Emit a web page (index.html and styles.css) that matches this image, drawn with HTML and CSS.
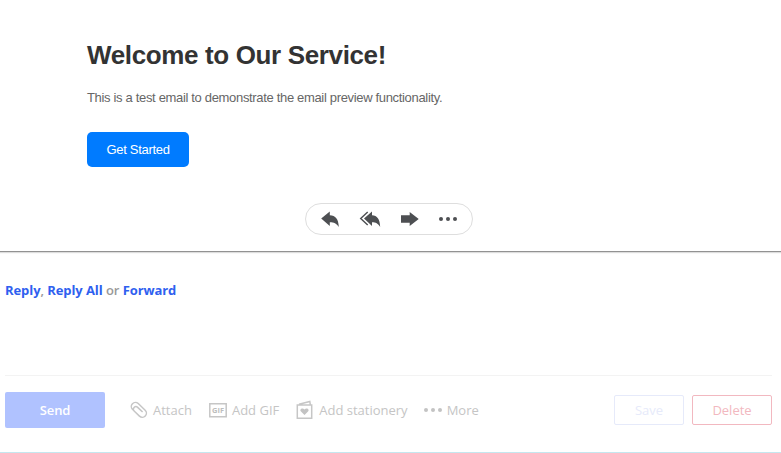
FILE: index.html
```html
<!DOCTYPE html>
<html lang="en">
<head>
<meta charset="utf-8">
<title>Email preview</title>
<link rel="stylesheet" href="styles.css">
</head>
<body>
<main class="message">
  <article class="email">
    <h1>Welcome to Our Service!</h1>
    <p>This is a test email to demonstrate the email preview functionality.</p>
    <a class="cta">Get Started</a>
  </article>
  <nav class="pill">
    <svg class="act" viewBox="0 0 20 18"><path d="M1.200 8.500 9.800 1.400v3.900C15.500 5.400 18.500 9 18.800 17 16.500 13.500 14 12.300 9.800 12.300v3.600z"/></svg>
    <svg class="act wide" viewBox="0 0 22 18"><path d="M5 8.500 13 1.400v3.900c5.200.100 7.800 3.700 8.200 11.700-2.200-3.500-4.400-4.700-8.200-4.700v3.600z"/><path class="line" d="M8.700 2 1.700 8.500l7 6.500"/></svg>
    <svg class="act arrow" viewBox="0 0 20 18"><path d="M1 5.200h8.700V2.100L18.700 9l-9 6.900v-3.200H1z"/></svg>
    <svg class="act" viewBox="0 0 20 18"><circle cx="3" cy="9" r="2"/><circle cx="10" cy="9" r="2"/><circle cx="17" cy="9" r="2"/></svg>
  </nav>
</main>
<section class="composer">
  <p class="quick"><b>Reply</b>, <b>Reply All</b> or <b>Forward</b></p>
  <footer class="bar">
    <button class="send">Send</button>
    <div class="tool attach"><svg width="18" height="18" viewBox="0 0 18 18"><path transform="translate(9 9) rotate(44)" d="M-4.500 4.100H-5A4.100 4.100 0 0 1-5-4.100H4.600A4.100 4.100 0 0 1 4.600 4.100H-2.800A2.500 2.500 0 0 1-2.800-1H4"/></svg><span>Attach</span></div>
    <div class="tool gif"><svg width="18" height="18" viewBox="0 0 18 18"><path d="M.8 2.800h16.400v12.900H.8z"/><text x="3" y="12" textLength="12" lengthAdjust="spacingAndGlyphs">GIF</text></svg><span>Add GIF</span></div>
    <div class="tool stationery"><svg width="18" height="20" viewBox="0 0 18 20"><path d="M1.300 4.900h14.400v13.300H1.300zM3 4.200l10.800-2.700.500 3.200"/><path class="heart" d="M8.500 15.100 5 11.500C3 9.200 6.600 7.100 8.500 9.500c1.900-2.400 5.500-.3 3.500 2z"/></svg><span>Add stationery</span></div>
    <div class="tool more"><svg width="20" height="18" viewBox="0 0 20 18"><circle cx="3" cy="9" r="2"/><circle cx="10" cy="9" r="2"/><circle cx="17" cy="9" r="2"/></svg><span>More</span></div>
    <button class="save">Save</button>
    <button class="delete">Delete</button>
  </footer>
</section>
</body>
</html>
```
FILE: styles.css
```css
* { box-sizing: border-box; }
body {
  margin: 0;
  height: 453px;
  overflow: hidden;
  background: #fff;
  font: 13px/18px "Open Sans", sans-serif;
  display: flex;
  flex-direction: column;
}
.message {
  height: 252px;
  border-bottom: 1px solid #929292;
  box-shadow: 0 1px 1px #ddd;
}
.email {
  height: 203px;
  padding: 39px 0 0 87px;
  font-family: "Liberation Sans", Arial, sans-serif;
}
.email h1 {
  margin: 0;
  font-size: 26px;
  line-height: 32px;
  letter-spacing: -0.36px;
  color: #333;
  white-space: nowrap;
}
.email p {
  margin: 17px 0 25px;
  line-height: 19px;
  color: #666;
  font-size: 13px;
  letter-spacing: -0.33px;
}
.cta {
  display: flex;
  align-items: center;
  justify-content: center;
  width: 102px;
  height: 35px;
  border-radius: 5px;
  background: #007bff;
  color: #fff;
  font-size: 13px;
  letter-spacing: -0.3px;
}
.pill {
  width: 168px;
  height: 32px;
  margin-left: 305px;
  padding: 0 14px;
  border: 1px solid #dedede;
  border-radius: 16px;
  display: flex;
  align-items: center;
  justify-content: space-between;
}
.act { width: 20px; height: 18px; fill: #4d4f52; }
.act.wide { width: 22px; }
.act.arrow { margin: 0 -1px 0 1px; }
.act .line { fill: none; stroke: #4d4f52; stroke-width: 1.4; }
.composer {
  height: 201px;
  padding: 29px 9px 0 5px;
  border-bottom: 1px solid #c5e7ef;
}
.quick {
  height: 94px;
  margin: 0;
  color: #999;
  font-weight: 600;
  letter-spacing: -0.08px;
  white-space: nowrap;
}
.quick b { color: #2f5fef; font-weight: 700; }
.bar {
  display: flex;
  align-items: center;
  height: 69px;
  border-top: 1px solid #f3f3f3;
  color: #c5c5c5;
}
button {
  font: inherit;
  padding: 0;
  background: #fff;
  border-radius: 2px;
}
.send {
  width: 100px;
  height: 36px;
  border: 0;
  background: #b0c2ff;
  color: #fff;
  font-weight: 600;
  letter-spacing: -0.1px;
}
.tool { display: flex; align-items: center; white-space: nowrap; }
.tool svg {
  flex: none;
  fill: none;
  stroke: #c6c6c6;
  stroke-width: 1.5;
}
.tool text {
  font: 700 7px "Open Sans", sans-serif;
  fill: #bdbdbd;
  stroke: none;
}
.tool .heart { fill: #c3c3c3; stroke: none; }
.attach { margin-left: 25px; gap: 5px; }
.gif { margin-left: 17px; gap: 5px; }
.stationery { margin-left: 17px; gap: 5px; }
.more { margin-left: 15px; gap: 4px; }
.more svg { fill: #c3c3c3; stroke: none; }
.save {
  width: 70px;
  height: 30px;
  margin-left: auto;
  border: 1px solid #e6eafa;
  color: #e6eafa;
}
.delete {
  width: 80px;
  height: 30px;
  margin-left: 8px;
  border: 1px solid #f2b8c0;
  color: #f2b8c0;
}
```
